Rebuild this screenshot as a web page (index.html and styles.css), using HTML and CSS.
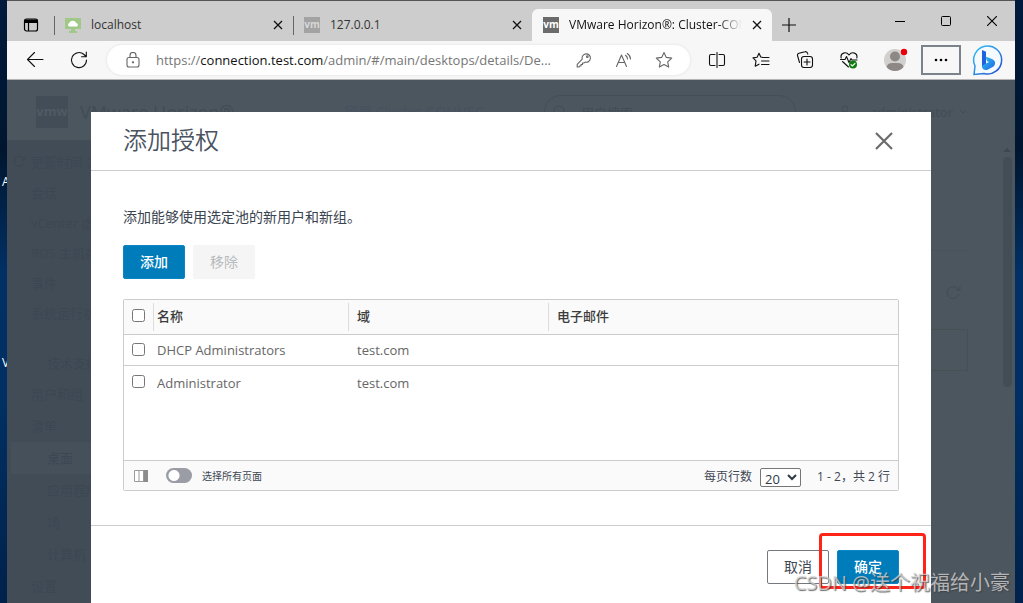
FILE: index.html
```html
<!DOCTYPE html>
<html lang="zh-CN">
<head>
<meta charset="utf-8">
<title>VMware Horizon</title>
<link rel="stylesheet" href="styles.css">
</head>
<body>
<span class="desktop-label desktop-label-a">A</span>
<span class="desktop-label desktop-label-v">V</span>
<div class="window">
  <header class="tabstrip">
    <button class="tab-menu" aria-label="标签页操作">
      <svg width="16" height="16" viewBox="0 0 16 16"><rect x="1.500" y="2" width="13" height="12" rx="2" fill="none" stroke="#000" stroke-width="1.200"/><path d="M1.500 2.500h13V6h-13z"/><path d="M5.500 6v8" stroke="#000" stroke-width="1.200"/></svg>
    </button>
    <div class="tab">
      <svg class="tab-icon" width="16" height="16" viewBox="0 0 16 16"><path d="M0 1h16v11H0zM6 12h4v2h2v2H4v-2h2z" fill="#a0c987"/><path d="M4 9.500a2 2 0 0 1 .2-3.500 3.800 3.800 0 0 1 7 0A1.900 1.900 0 0 1 12 9.500z" fill="#fff"/></svg>
      <span class="tab-title">localhost</span>
      <button class="tab-close" aria-label="关闭"><svg width="10" height="10" viewBox="0 0 10 10"><path d="M1 1l8 8M9 1l-8 8" stroke="#111" stroke-width="1.300"/></svg></button>
    </div>
    <div class="tab">
      <span class="tab-icon vm-icon vm-dim">vm</span>
      <span class="tab-title">127.0.0.1</span>
      <button class="tab-close" aria-label="关闭"><svg width="10" height="10" viewBox="0 0 10 10"><path d="M1 1l8 8M9 1l-8 8" stroke="#111" stroke-width="1.300"/></svg></button>
    </div>
    <div class="tab tab-active">
      <span class="tab-icon vm-icon">vm</span>
      <span class="tab-title tab-fade">VMware Horizon®: Cluster-CONN</span>
      <button class="tab-close" aria-label="关闭"><svg width="10" height="10" viewBox="0 0 10 10"><path d="M1 1l8 8M9 1l-8 8" stroke="#111" stroke-width="1.300"/></svg></button>
    </div>
    <button class="new-tab" aria-label="新建标签页"><svg width="14" height="14" viewBox="0 0 14 14"><path d="M7 0v14M0 7h14" stroke="#111" stroke-width="1.200"/></svg></button>
    <div class="window-controls">
      <button aria-label="最小化"><svg width="10" height="10" viewBox="0 0 10 10"><path d="M0 5.500h10" stroke="#000"/></svg></button>
      <button aria-label="最大化"><svg width="10" height="10" viewBox="0 0 10 10"><rect x=".5" y=".5" width="9" height="9" rx="1" fill="none" stroke="#000"/></svg></button>
      <button aria-label="关闭窗口"><svg width="10" height="10" viewBox="0 0 10 10"><path d="M0 0l10 10M10 0L0 10" stroke="#000" stroke-width="1.100"/></svg></button>
    </div>
  </header>

  <nav class="toolbar">
    <button class="tool" aria-label="后退"><svg width="18" height="18" viewBox="0 0 18 18" class="line dark"><path d="M17 8.500H1.500M8.500 1.500l-7 7 7 7"/></svg></button>
    <button class="tool" aria-label="刷新"><svg width="18" height="18" viewBox="0 0 18 18" class="line dark"><path d="M16.500 9A7.500 7.500 0 1 1 14 3.500l2 2M16.300 1v4.700h-4.800"/></svg></button>
    <div class="address">
      <svg class="lock line" width="14" height="16" viewBox="0 0 14 16"><rect x="1" y="5.500" width="12" height="9.500" rx="2"/><path d="M4 5.500V3.500a3 3 0 0 1 6 0v2"/><circle cx="7" cy="10.300" r=".6" fill="#555"/></svg>
      <span class="url">https://<span class="host">connection.test.com</span>/admin/#/main/desktops/details/De...</span>
      <button aria-label="密码"><svg width="16" height="16" viewBox="0 0 16 16" class="line"><path d="M6.200 7.200a4.200 4.200 0 1 1 3 2.900L7.800 11H6.500v1.500H5V14H3.500l-.5 1H1.200v-2.600z"/><circle cx="11.300" cy="4.700" r=".8"/></svg></button>
      <button aria-label="朗读"><svg width="18" height="16" viewBox="0 0 18 16" class="line"><path d="M1.500 14.500L6.500 3l5 11.500M3.200 10.500h6.600M10.500 3.300a4.500 4.500 0 0 1 2 3.700M12.300 1.500A7 7 0 0 1 15.500 7"/></svg></button>
      <button aria-label="收藏"><svg width="18" height="18" viewBox="0 0 18 18" class="line"><path d="M9 1.500l2.300 4.900 5.400.7-4 3.700 1 5.300L9 13.500l-4.700 2.600 1-5.300-4-3.700 5.400-.7z"/></svg></button>
    </div>
    <button class="tool" aria-label="分屏"><svg width="18" height="16" viewBox="0 0 18 16" class="line dark"><path d="M7 2.500H3a1.500 1.500 0 0 0-1.500 1.500v8A1.500 1.500 0 0 0 3 13.500h4M11 2.500h4A1.500 1.500 0 0 1 16.500 4v8a1.500 1.500 0 0 1-1.500 1.500h-4M9 .5v15"/></svg></button>
    <button class="tool" aria-label="收藏夹"><svg width="18" height="16" viewBox="0 0 18 16" class="line dark"><path d="M11 5.500L8.800 5 7 1.200 5.100 5.300 1 5.900l3 3-.8 5.300L7 12.200M11 5.500h6M9.500 9H17M9.500 12.500H17"/></svg></button>
    <button class="tool" aria-label="集锦"><svg width="18" height="18" viewBox="0 0 18 18" class="line dark"><rect x="5.500" y="5.500" width="11" height="11" rx="2.500"/><path d="M11 8v6M8 11h6M3.500 11.500l-2-7A2 2 0 0 1 3 2.200l6-1.500a2 2 0 0 1 2.500 1.500l.3 1"/></svg></button>
    <button class="tool" aria-label="浏览器概要"><svg width="18" height="18" viewBox="0 0 18 18" class="line dark"><path d="M1.200 7C0 2 6 0 9 4c3-4 9-2 7.800 3M.5 8.500H5l1.500-3 2.500 6 2-4 1 1.500h5M2.500 10.500L8.500 16"/><circle cx="13" cy="13.500" r="4" fill="#107c10" stroke="none"/><path d="M11 13.700l1.400 1.300 2.600-2.700" stroke="#fff"/></svg></button>
    <button class="tool profile" aria-label="个人资料"><svg width="26" height="26" viewBox="0 0 26 26"><circle cx="13" cy="13" r="11" fill="#d2d0ce"/><circle cx="13" cy="9.500" r="5" fill="#8d8885"/><path d="M4.500 20c1-4 4-4 8.500-4s7.500 0 8.500 4A11 11 0 0 1 4.500 20z" fill="#8d8885"/><circle cx="22" cy="5" r="3.200" fill="#e8000b"/></svg></button>
    <button class="more" aria-label="更多">
      <svg width="14" height="4" viewBox="0 0 14 4"><circle cx="2" cy="2" r="1.300"/><circle cx="7" cy="2" r="1.300"/><circle cx="12" cy="2" r="1.300"/></svg>
    </button>
    <button class="bing" aria-label="Bing"><svg width="32" height="32" viewBox="0 0 32 32"><defs><linearGradient id="ring" x1="0" y1="0" x2="1" y2="1"><stop offset="0" stop-color="#32c5f4"/><stop offset="1" stop-color="#244bd2"/></linearGradient><linearGradient id="mark" x1="0" y1="0" x2="1" y2="1"><stop offset="0" stop-color="#2ac4ec"/><stop offset="1" stop-color="#2165e8"/></linearGradient></defs><path d="M2 30.500L3 22A14 14 0 1 1 12 29.500z" fill="#f5faff" stroke="url(#ring)" stroke-width="1.500"/><path d="M10 6l4 1.700V20l-4 3z" fill="#1f62df"/><path d="M10 22l4-2.500 3-1.500-2-1-1.500-4.500L20 15c3.500 1.500 4 5 1.500 7.500L16 25.500c-3 1.500-6 0-6-3.500z" fill="url(#mark)"/></svg></button>
  </nav>

  <main class="page">
    <div class="app" aria-hidden="true">
      <div class="app-header">
        <span class="app-logo">vmw</span>
        <span class="app-name">VMware Horizon®</span>
        <span class="app-cluster">容器 Cluster-CONNEC</span>
        <span class="app-search"><svg width="14" height="14" viewBox="0 0 14 14" class="ghost-line"><circle cx="6" cy="6" r="5"/><path d="M10 10l3 3"/></svg>用户搜索</span>
        <span class="app-user"><svg width="10" height="14" viewBox="0 0 10 14" class="ghost-line"><circle cx="5" cy="4" r="3"/><path d="M1 13V11q0-3 4-3t4 3v2z"/></svg>administrator<svg width="8" height="6" viewBox="0 0 8 6" class="ghost-line chevron"><path d="M1 1l3 3 3-3"/></svg></span>
      </div>
      <div class="app-body">
        <ul class="side">
          <li class="refresh-row"><svg width="14" height="14" viewBox="0 0 14 14" class="ghost-line"><path d="M12 8a5 5 0 1 1-1-5l2 1M13 1v4H9"/></svg>更新时间 2023</li>
          <li>会话</li><li>vCenter 虚拟机</li><li>RDS 主机存储</li><li>事件</li><li>系统运行状况</li>
          <li class="side-group sub">技术支持</li><li class="tall">用户和组</li><li class="tall">清单</li>
          <li class="tall sub current">桌面</li><li class="tall sub">应用程序</li><li class="tall sub">场</li><li class="tall sub">计算机</li><li class="tall">设置</li>
        </ul>
        <div class="content">
          <div class="content-top"></div>
          <svg width="16" height="16" viewBox="0 0 16 16" class="ghost-line"><path d="M14 9a6 6 0 1 1-1-5l2 1M15 1v4h-4"/></svg>
          <div class="content-box"></div>
        </div>
        <div class="scroll"><i class="scroll-arrow"></i><i class="scroll-thumb"></i></div>
      </div>
    </div>

    <div class="overlay">
      <section class="modal" role="dialog" aria-labelledby="dialog-title">
        <div class="modal-header">
          <h1 id="dialog-title">添加授权</h1>
          <button class="modal-close" aria-label="关闭对话框"><svg width="18" height="18" viewBox="0 0 18 18"><path d="M1 1l16 16M17 1L1 17" stroke="#6b6b6b" stroke-width="2.200"/></svg></button>
        </div>
        <div class="modal-body">
          <p>添加能够使用选定池的新用户和新组。</p>
          <div class="actions">
            <button class="btn btn-primary">添加</button>
            <button class="btn btn-disabled" disabled>移除</button>
          </div>
          <div class="grid">
            <div class="grid-rows">
              <table>
                <colgroup><col class="col-check"><col class="col-name"><col class="col-domain"><col></colgroup>
                <thead>
                  <tr><th><input type="checkbox" aria-label="全选"></th><th><span class="head head-name">名称</span></th><th><span class="head">域</span></th><th><span class="head">电子邮件</span></th></tr>
                </thead>
                <tbody>
                  <tr><td><input type="checkbox" aria-label="DHCP Administrators"></td><td class="name">DHCP Administrators</td><td>test.com</td><td></td></tr>
                  <tr><td><input type="checkbox" aria-label="Administrator"></td><td class="name">Administrator</td><td>test.com</td><td></td></tr>
                </tbody>
              </table>
            </div>
            <div class="grid-footer">
              <svg width="14" height="12" viewBox="0 0 14 12"><path d="M.5.5h13v11H.5zM5 .5v11M9.500.5v11" fill="#fff" stroke="#9a9a9a"/><path d="M10 0h4v12h-4z" fill="#8c8c8c"/></svg>
              <label class="toggle"><input type="checkbox">选择所有页面</label>
              <label class="page-size">每页行数 <select><option>20</option><option>50</option></select></label>
              <span class="range">1 - 2，共 2 行</span>
            </div>
          </div>
        </div>
        <div class="modal-footer">
          <button class="btn btn-outline">取消</button>
          <span class="confirm"><button class="btn btn-primary">确定</button><span class="highlight"></span></span>
        </div>
      </section>
    </div>
  </main>
</div>
<span class="watermark">CSDN @送个祝福给小豪</span>
</body>
</html>
```
FILE: styles.css
```css
* { box-sizing: border-box; }
body {
  position: relative;
  margin: 0;
  height: 100vh;
  overflow: hidden;
  background: linear-gradient(180deg, #001a3d 0%, #00162f 25%, #013064 45%, #003063 65%, #00214b 100%);
  font-family: "Open Sans", "Noto Sans CJK SC", sans-serif;
  font-size: 13px;
  color: #3f4854;
}
button { font: inherit; color: inherit; border: 0; background: none; padding: 0; }
svg { display: block; flex: none; }
ul { list-style: none; margin: 0; padding: 0; }

.desktop-label { position: absolute; left: 2px; color: #fff; font-size: 12px; line-height: 16px; }
.desktop-label-a { top: 174px; }
.desktop-label-v { top: 355px; }

.window {
  position: relative;
  height: 100%;
  margin: 0 8px 0 7px;
  display: flex;
  flex-direction: column;
  border-top: 1px solid #555;
}

/* Tab strip */
.tabstrip { display: flex; align-items: flex-end; height: 40px; background: #cdcdcd; flex: none; }
.tab-menu { width: 47px; height: 32px; display: grid; place-items: center; }
.tab {
  position: relative;
  flex: 0 1 239px;
  min-width: 0;
  height: 32px;
  display: flex;
  align-items: center;
  gap: 10px;
  padding: 0 10px 0 11px;
  color: #333;
  font-size: 12px;
}
.tab:not(.tab-active) { background: linear-gradient(#666, #666) 0 7px / 1px 19px no-repeat; }
.tab-active { flex-basis: 240px; background: #f7f7f7; border-radius: 6px 6px 0 0; color: #111; }
.tab-title { flex: 1; min-width: 0; white-space: nowrap; line-height: 16px; }
.tab-fade { mask-image: linear-gradient(90deg, #000 86%, transparent); }
.tab-close { width: 10px; height: 10px; }
.vm-icon {
  width: 16px; height: 16px; flex: none;
  background: #6b6b6b; color: #fff;
  font-size: 10px; line-height: 14px; font-weight: 700; text-align: center;
}
.vm-dim { background: #a3a3a3; color: #d8d8d8; }
.new-tab { width: 34px; height: 32px; display: grid; place-items: center; }
.window-controls { display: flex; margin-left: auto; height: 40px; }
.window-controls button { width: 46px; display: grid; place-items: center; }

/* Toolbar */
.toolbar {
  display: flex; align-items: center; flex: none;
  height: 39px; padding: 0 4px 0 6px;
  background: #f7f7f7; border-bottom: 1px solid #b5b5b5;
}
.line { fill: none; stroke: #666; stroke-width: 1.1; stroke-linejoin: round; stroke-linecap: round; }
.dark { stroke: #111; }
.tool { width: 44px; height: 30px; display: grid; place-items: center; }
.profile { padding-left: 4px; }
.address {
  flex: 1; min-width: 0; height: 30px; margin: 0 5px 0 6px; padding: 0 6px 0 19px;
  display: flex; align-items: center;
  background: #fff; border-radius: 15px; box-shadow: 0 0 3px #ddd;
}
.lock { margin-right: 16px; }
.url { flex: 1; min-width: 0; white-space: nowrap; font-size: 13px; line-height: 20px; color: #767676; }
.host { color: #111; }
.address button { width: 40px; height: 30px; display: grid; place-items: center; flex: none; }
.more { width: 40px; height: 30px; margin: 0 4px 0 6px; border: 2px solid #7c828a; display: grid; place-items: center; }
.bing { width: 46px; display: grid; place-items: center; }

/* Application behind the dialog */
.page { position: relative; flex: 1; min-height: 0; overflow: hidden; background: #4c565f; }
.app { height: 100%; display: flex; flex-direction: column; color: #414c56; }
.app-header { display: flex; align-items: center; height: 60px; padding: 4px 48px 0 29px; flex: none; white-space: nowrap; }
.app-logo { width: 32px; height: 32px; background: #434d57; color: #505a64; line-height: 30px; font-weight: 700; text-align: center; }
.app-name { width: 276px; padding-left: 12px; font-size: 18px; }
.app-cluster { width: 200px; font-size: 14px; line-height: 20px; color: #445260; }
.app-search { display: flex; align-items: center; gap: 14px; width: 252px; height: 34px; padding: 0 8px; border: 1px solid #444e58; border-radius: 17px; }
.app-user { display: flex; align-items: center; gap: 20px; margin-left: auto; }
.chevron { margin-left: -14px; }
.app-body { flex: 1; min-height: 0; display: flex; }
.ghost-line { fill: none; stroke: #424c56; }
.side { width: 192px; padding-top: 6px; background: #424c56; color: #3c4753; overflow: hidden; font-size: 13px; flex: none; }
.side .ghost-line { stroke: #3c4753; }
.side li { height: 30px; line-height: 30px; padding-left: 24px; white-space: nowrap; }
.side .refresh-row { height: 32px; display: flex; align-items: center; gap: 5px; padding-left: 5px; }
.side .sub { padding-left: 40px; }
.side .side-group { height: 50px; padding-top: 20px; }
.side .tall { height: 32px; line-height: 32px; }
.side .current { margin-left: 4px; padding-left: 36px; background: #46505a; }
.content { flex: 1; display: flex; flex-direction: column; align-items: flex-end; }
.content-top { align-self: stretch; height: 111px; margin-bottom: 34px; border-bottom: 1px solid #485259; }
.content-box { align-self: stretch; height: 42px; margin-top: 28px; border: 1px solid #475152; }
.content > svg { margin-right: 7px; }
.scroll { width: 47px; padding: 8px 3px 0 34px; display: flex; flex-direction: column; align-items: center; gap: 5px; }
.scroll-arrow { border: 4px solid transparent; border-top: 0; border-bottom-color: #3d4750; }
.scroll-thumb { width: 9px; height: 230px; border-radius: 4px; background: #434d56; }

/* Dialog */
.overlay { position: absolute; inset: 0; padding: 32px 84px 0; }
.modal { background: #fff; }
.modal-header { display: flex; align-items: center; justify-content: space-between; height: 59px; padding: 0 38px 0 32px; border-bottom: 1px solid #ccc; }
.modal-header h1 { margin: 0; padding-bottom: 2px; font-size: 24px; line-height: 32px; font-weight: 350; color: #4a535f; }
.modal-close { width: 18px; height: 18px; }
.modal-body { padding: 34px 32px; }
.modal-body p { margin: 0; font-size: 14px; line-height: 24px; color: #3a4350; }
.actions { display: flex; gap: 8px; margin: 16px 0 20px; }
.btn { width: 62px; height: 34px; border-radius: 2px; font-size: 14px; line-height: 20px; }
.btn-primary { background: #007cbb; border: 1px solid #0a86c4; color: #fff; font-weight: 500; }
.btn-disabled { background: #f5f5f5; color: #b8babd; }
.btn-outline { background: #fff; border: 1px solid #75797f; }

.grid { border: 1px solid #ccc; border-radius: 2px; }
.grid-rows { min-height: 160px; }
table { width: 100%; border-collapse: separate; border-spacing: 0; table-layout: fixed; }
.col-check { width: 29px; }
.col-name { width: 195px; }
.col-domain { width: 200px; }
th { height: 35px; padding: 0; background: #fafafa; border-bottom: 1px solid #ccc; text-align: left; font-weight: 500; color: #3c3c3c; }
th:first-child { padding-bottom: 4px; }
td { height: 31px; padding: 0 0 0 9px; color: #666; }
td.name { padding-left: 4px; }
tbody tr:first-child td { border-bottom: 1px solid #ccc; }
tbody tr:last-child td { height: 33px; }
.head { display: block; height: 28px; line-height: 26px; padding-left: 8px; border-left: 1px solid #ddd; }
.head-name { padding-left: 3px; }
table input { display: block; width: 13px; height: 13px; margin: 0 0 0 8px; }
td:first-child { padding: 0 0 2px; }

.grid-footer { display: flex; align-items: center; height: 30px; padding: 0 8px 0 10px; background: #fafafa; border-top: 1px solid #ccc; font-size: 12px; }
.toggle { display: flex; align-items: center; gap: 10px; margin-left: 18px; font-size: 10px; }
.toggle input {
  appearance: none; width: 26px; height: 15px; margin: 0; border-radius: 8px;
  background: radial-gradient(circle at 8px 50%, #fff 5px, transparent 6px) #9a9da6;
}
.page-size { display: flex; align-items: center; gap: 8px; margin-left: auto; }
.page-size select { width: 41px; height: 19px; margin-top: 3px; padding: 0; border: 1px solid #767676; border-radius: 2px; background: #fff; color: #303946; font-family: inherit; font-size: 13px; line-height: 16px; }
.range { margin-left: 16px; }

.modal-footer { display: flex; justify-content: flex-end; gap: 8px; padding: 24px 32px; border-top: 1px solid #ccc; }
.confirm { position: relative; display: flex; }
.highlight { position: absolute; inset: -17px -27px -5px -18px; border: 3px solid #ff2418; border-radius: 4px; }

.watermark {
  position: absolute; right: 13px; bottom: 6px;
  font-size: 20px; line-height: 28px; white-space: nowrap;
  color: rgba(215, 215, 215, .75); text-shadow: 1px 1px 1px rgba(60, 60, 60, .75);
}
```
